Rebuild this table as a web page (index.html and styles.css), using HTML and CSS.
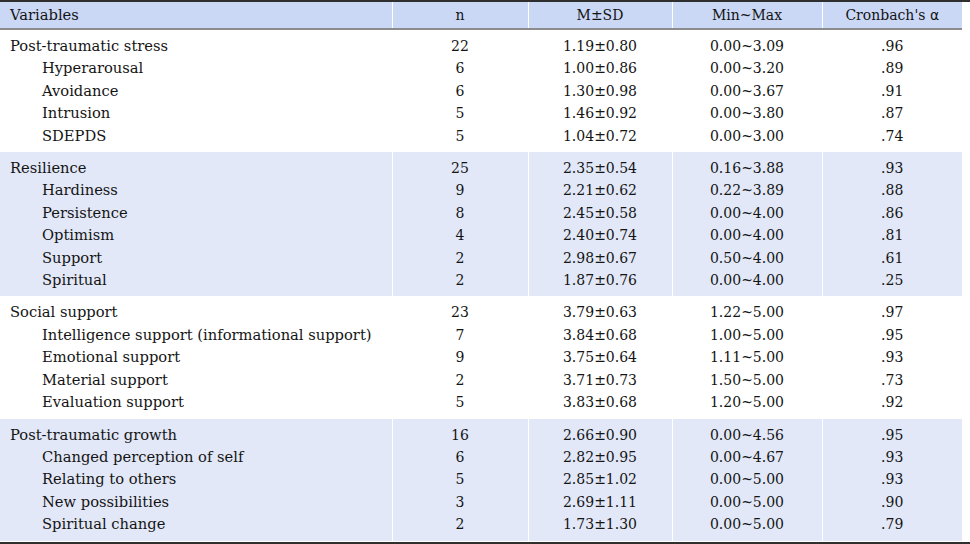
FILE: index.html
```html
<!DOCTYPE html>
<html>
<head>
<meta charset="utf-8">
<link rel="stylesheet" href="styles.css">
</head>
<body>
<div class="frame">
<table class="stats">
  <colgroup>
    <col class="c-var"><col class="c-n"><col class="c-msd"><col class="c-mm"><col class="c-a">
  </colgroup>
  <thead>
    <tr><th class="left">Variables</th><th>n</th><th>M±SD</th><th>Min~Max</th><th>Cronbach's <span class="alpha">α</span></th></tr>
  </thead>
  <tbody>
    <tr><td class="left">Post-traumatic stress</td><td>22</td><td>1.19±0.80</td><td>0.00~3.09</td><td>.96</td></tr>
    <tr><td class="left sub">Hyperarousal</td><td>6</td><td>1.00±0.86</td><td>0.00~3.20</td><td>.89</td></tr>
    <tr><td class="left sub">Avoidance</td><td>6</td><td>1.30±0.98</td><td>0.00~3.67</td><td>.91</td></tr>
    <tr><td class="left sub">Intrusion</td><td>5</td><td>1.46±0.92</td><td>0.00~3.80</td><td>.87</td></tr>
    <tr><td class="left sub">SDEPDS</td><td>5</td><td>1.04±0.72</td><td>0.00~3.00</td><td>.74</td></tr>
  </tbody>
  <tbody class="shade">
    <tr><td class="left">Resilience</td><td>25</td><td>2.35±0.54</td><td>0.16~3.88</td><td>.93</td></tr>
    <tr><td class="left sub">Hardiness</td><td>9</td><td>2.21±0.62</td><td>0.22~3.89</td><td>.88</td></tr>
    <tr><td class="left sub">Persistence</td><td>8</td><td>2.45±0.58</td><td>0.00~4.00</td><td>.86</td></tr>
    <tr><td class="left sub">Optimism</td><td>4</td><td>2.40±0.74</td><td>0.00~4.00</td><td>.81</td></tr>
    <tr><td class="left sub">Support</td><td>2</td><td>2.98±0.67</td><td>0.50~4.00</td><td>.61</td></tr>
    <tr><td class="left sub">Spiritual</td><td>2</td><td>1.87±0.76</td><td>0.00~4.00</td><td>.25</td></tr>
  </tbody>
  <tbody>
    <tr><td class="left">Social support</td><td>23</td><td>3.79±0.63</td><td>1.22~5.00</td><td>.97</td></tr>
    <tr><td class="left sub">Intelligence support (informational support)</td><td>7</td><td>3.84±0.68</td><td>1.00~5.00</td><td>.95</td></tr>
    <tr><td class="left sub">Emotional support</td><td>9</td><td>3.75±0.64</td><td>1.11~5.00</td><td>.93</td></tr>
    <tr><td class="left sub">Material support</td><td>2</td><td>3.71±0.73</td><td>1.50~5.00</td><td>.73</td></tr>
    <tr><td class="left sub">Evaluation support</td><td>5</td><td>3.83±0.68</td><td>1.20~5.00</td><td>.92</td></tr>
  </tbody>
  <tbody class="shade">
    <tr><td class="left">Post-traumatic growth</td><td>16</td><td>2.66±0.90</td><td>0.00~4.56</td><td>.95</td></tr>
    <tr><td class="left sub">Changed perception of self</td><td>6</td><td>2.82±0.95</td><td>0.00~4.67</td><td>.93</td></tr>
    <tr><td class="left sub">Relating to others</td><td>5</td><td>2.85±1.02</td><td>0.00~5.00</td><td>.93</td></tr>
    <tr><td class="left sub">New possibilities</td><td>3</td><td>2.69±1.11</td><td>0.00~5.00</td><td>.90</td></tr>
    <tr><td class="left sub">Spiritual change</td><td>2</td><td>1.73±1.30</td><td>0.00~5.00</td><td>.79</td></tr>
  </tbody>
</table>
</div>
</body>
</html>
```

FILE: styles.css
```css
html, body {
  margin: 0;
  padding: 0;
  background: #fff;
}

.frame {
  width: 970px;
  border-top: 2px solid #2f2f2f;
  border-bottom: 2px solid #2f2f2f;
  box-sizing: border-box;
  height: 544px;
}

.stats {
  width: 962px;
  border-collapse: collapse;
  table-layout: fixed;
  font-family: "DejaVu Serif", serif;
  font-size: 14px;
  color: #141414;
}

.c-var { width: 392px; }
.c-n { width: 136px; }
.c-msd { width: 144px; }
.c-mm { width: 150px; }
.c-a { width: 140px; }

.stats th,
.stats td {
  padding: 0;
  text-align: center;
  font-weight: normal;
  border-right: 1px solid #fff;
  white-space: nowrap;
}

.stats th:last-child,
.stats td:last-child {
  border-right: none;
}

.stats thead th {
  background: #cad8f6;
  height: 26px;
  line-height: 26px;
  border-bottom: 2px solid #8c8c8c;
}

.stats .left {
  text-align: left;
  padding-left: 10px;
  font-size: 14.7px;
}

.stats .sub {
  padding-left: 42px;
}

.alpha {
  font-family: "DejaVu Sans", sans-serif;
  font-size: 14px;
}

.stats tbody td {
  height: 22.4px;
  line-height: 22.4px;
}

.stats tbody tr:first-child td {
  padding-top: 5px;
}

.stats tbody tr:last-child td {
  padding-bottom: 5px;
}

.stats tbody.shade td {
  background: #e2e8f8;
}
```
